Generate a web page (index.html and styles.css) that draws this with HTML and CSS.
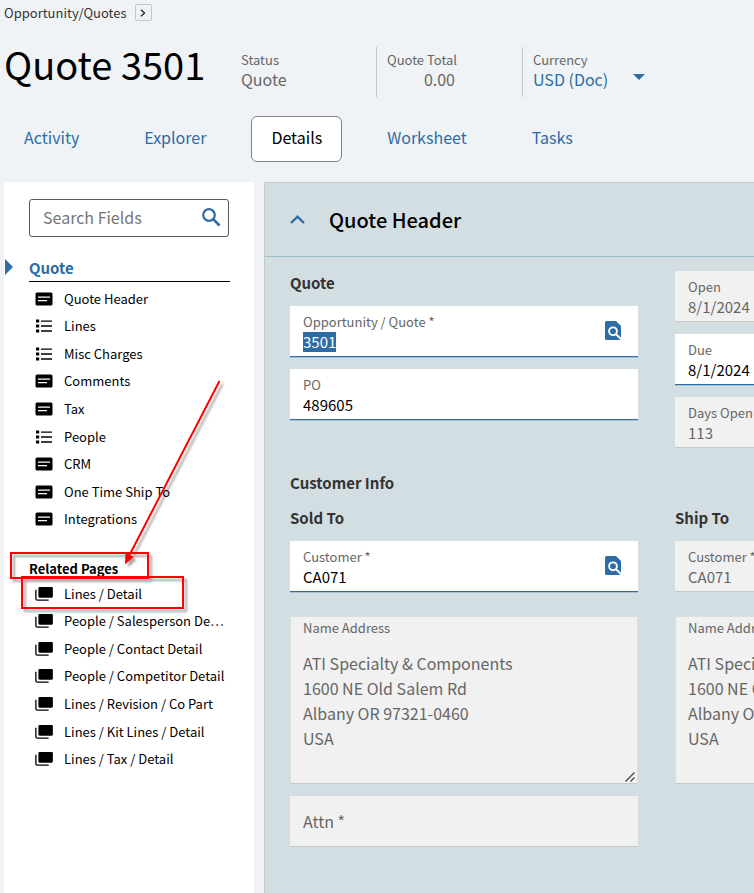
FILE: index.html
```html
<!DOCTYPE html>
<html lang="en">

<head>
    <meta charset="UTF-8">
    <meta name="viewport" content="width=device-width, initial-scale=1.0">
    <title>Quote 3501</title>
    <link rel="stylesheet" href="styles.css">
</head>

<body>
    <!-- Shared icons -->
    <svg class="icon-defs" aria-hidden="true">
        <symbol id="icon-card" viewBox="0 0 18 14">
            <rect x="0.5" y="0.5" width="17" height="13" rx="1.5" />
            <path d="M3 5.2h12M3 8.6h9" stroke="#fff" stroke-width="1.3" fill="none" />
        </symbol>
        <symbol id="icon-list" viewBox="0 0 18 14">
            <path d="M1 0.5h3.2v3H1zM1 5.5h3.2v3H1zM1 10.5h3.2v3H1zM6 1.4h11v1.4H6zM6 6.3h11v1.4H6zM6 11.3h11v1.4H6z" />
        </symbol>
        <symbol id="icon-pages" viewBox="0 0 19 15">
            <rect x="3.5" y="0" width="15.5" height="11.5" rx="1.2" />
            <path d="M0.8 3v9.5q0 1.5 1.5 1.5H14.5" stroke="#000" stroke-width="1.4" fill="none" />
        </symbol>
        <symbol id="icon-lookup" viewBox="0 0 16 19">
            <path fill="#2d6ca5" d="M1.5 0H11l5 5v12.5q0 1.500-1.500 1.500h-13Q0 19 0 17.500v-16Q0 0 1.500 0z" />
            <circle cx="8" cy="10.300" r="3.900" fill="none" stroke="#fff" stroke-width="1.900" />
            <path d="M10.800 13l5.400 5.200" stroke="#fff" stroke-width="1.900" />
        </symbol>
    </svg>

    <header class="page-header">
        <nav class="breadcrumb">
            <a href="#">Opportunity/Quotes</a>
            <button type="button" class="crumb-button" aria-label="Next">
                <svg width="6" height="8" viewBox="0 0 6 8"><path d="M1 0.7l3.5 3.3L1 7.3" fill="none" stroke="#333" stroke-width="1.5" /></svg>
            </button>
        </nav>

        <div class="title-row">
            <h1>Quote 3501</h1>
            <div class="summary">
                <div class="summary-item">
                    <span class="summary-label">Status</span>
                    <span class="summary-value">Quote</span>
                </div>
                <div class="summary-item">
                    <span class="summary-label">Quote Total</span>
                    <span class="summary-value amount">0.00</span>
                </div>
                <div class="summary-item">
                    <label class="summary-label" for="currency">Currency</label>
                    <div class="currency-box">
                        <select id="currency">
                            <option>USD (Doc)</option>
                        </select>
                        <svg class="currency-arrow" width="12" height="6" viewBox="0 0 12 6"><path d="M0 0h12L6 6z" fill="#2d6ca5" /></svg>
                    </div>
                </div>
            </div>
        </div>

        <nav class="tabs">
            <a href="#" class="tab">Activity</a>
            <a href="#" class="tab">Explorer</a>
            <a href="#" class="tab active">Details</a>
            <a href="#" class="tab">Worksheet</a>
            <a href="#" class="tab">Tasks</a>
        </nav>
    </header>

    <main class="content">
        <aside class="sidebar">
            <div class="search">
                <input type="text" placeholder="Search Fields" aria-label="Search Fields">
                <svg width="19" height="19" viewBox="0 0 19 19"><circle cx="7" cy="7" r="5.8" fill="none" stroke="#2d6ca5" stroke-width="2.2" /><path d="M11.2 11.2l6.3 6.3" stroke="#2d6ca5" stroke-width="2.6" /></svg>
            </div>

            <h2 class="nav-title">Quote</h2>
            <ul class="nav-list">
                <li><a href="#"><svg class="nav-icon"><use href="#icon-card" /></svg><span>Quote Header</span></a></li>
                <li><a href="#"><svg class="nav-icon"><use href="#icon-list" /></svg><span>Lines</span></a></li>
                <li><a href="#"><svg class="nav-icon"><use href="#icon-list" /></svg><span>Misc Charges</span></a></li>
                <li><a href="#"><svg class="nav-icon"><use href="#icon-card" /></svg><span>Comments</span></a></li>
                <li><a href="#"><svg class="nav-icon"><use href="#icon-card" /></svg><span>Tax</span></a></li>
                <li><a href="#"><svg class="nav-icon"><use href="#icon-list" /></svg><span>People</span></a></li>
                <li><a href="#"><svg class="nav-icon"><use href="#icon-card" /></svg><span>CRM</span></a></li>
                <li><a href="#"><svg class="nav-icon"><use href="#icon-card" /></svg><span>One Time Ship To</span></a></li>
                <li><a href="#"><svg class="nav-icon"><use href="#icon-card" /></svg><span>Integrations</span></a></li>
            </ul>

            <h3 class="related-title">Related Pages</h3>
            <ul class="nav-list related">
                <li><a href="#"><svg class="nav-icon"><use href="#icon-pages" /></svg><span>Lines / Detail</span></a></li>
                <li><a href="#"><svg class="nav-icon"><use href="#icon-pages" /></svg><span>People / Salesperson De…</span></a></li>
                <li><a href="#"><svg class="nav-icon"><use href="#icon-pages" /></svg><span>People / Contact Detail</span></a></li>
                <li><a href="#"><svg class="nav-icon"><use href="#icon-pages" /></svg><span>People / Competitor Detail</span></a></li>
                <li><a href="#"><svg class="nav-icon"><use href="#icon-pages" /></svg><span>Lines / Revision / Co Part</span></a></li>
                <li><a href="#"><svg class="nav-icon"><use href="#icon-pages" /></svg><span>Lines / Kit Lines / Detail</span></a></li>
                <li><a href="#"><svg class="nav-icon"><use href="#icon-pages" /></svg><span>Lines / Tax / Detail</span></a></li>
            </ul>
        </aside>

        <section class="panel">
            <div class="panel-header">
                <button type="button" class="collapse" aria-label="Collapse">
                    <svg width="15" height="9" viewBox="0 0 15 9"><path d="M1 8l6.5-6.3L14 8" fill="none" stroke="#2d6ca5" stroke-width="2.3" /></svg>
                </button>
                <h2>Quote Header</h2>
            </div>

            <div class="panel-body">
                <div class="columns">
                    <div class="column">
                        <h3>Quote</h3>
                        <div class="field">
                            <label for="quote">Opportunity / Quote *</label>
                            <input type="text" id="quote" value="3501" autofocus>
                            <button type="button" class="lookup" aria-label="Find quote"><svg width="16" height="19"><use href="#icon-lookup" /></svg></button>
                        </div>
                        <div class="field">
                            <label for="po">PO</label>
                            <input type="text" id="po" value="489605">
                        </div>
                    </div>
                    <div class="column">
                        <div class="field disabled">
                            <label for="open">Open</label>
                            <input type="text" id="open" value="8/1/2024" readonly>
                        </div>
                        <div class="field">
                            <label for="due">Due</label>
                            <input type="text" id="due" value="8/1/2024">
                        </div>
                        <div class="field disabled">
                            <label for="days">Days Open</label>
                            <input type="text" id="days" value="113" readonly>
                        </div>
                    </div>
                </div>

                <h3 class="section-title">Customer Info</h3>
                <div class="columns">
                    <div class="column">
                        <h3>Sold To</h3>
                        <div class="field">
                            <label for="sold-customer">Customer *</label>
                            <input type="text" id="sold-customer" value="CA071">
                            <button type="button" class="lookup" aria-label="Find customer"><svg width="16" height="19"><use href="#icon-lookup" /></svg></button>
                        </div>
                        <div class="address">
                            <label for="sold-address">Name Address</label>
                            <textarea id="sold-address" rows="5" readonly>ATI Specialty &amp; Components
1600 NE Old Salem Rd
Albany OR 97321-0460
USA</textarea>
                            <svg class="grip" width="10" height="10" viewBox="0 0 10 10"><path d="M0.5 9.5l9-9M5.5 9.5l4-4" stroke="#444" stroke-width="1.3" /></svg>
                        </div>
                        <div class="field disabled empty">
                            <label for="attn">Attn *</label>
                            <input type="text" id="attn" readonly>
                        </div>
                    </div>
                    <div class="column">
                        <h3>Ship To</h3>
                        <div class="field disabled">
                            <label for="ship-customer">Customer *</label>
                            <input type="text" id="ship-customer" value="CA071" readonly>
                        </div>
                        <div class="address">
                            <label for="ship-address">Name Address</label>
                            <textarea id="ship-address" rows="5" readonly>ATI Specialty &amp; Components
1600 NE Old Salem Rd
Albany OR 97321-0460
USA</textarea>
                        </div>
                    </div>
                </div>
            </div>
        </section>
    </main>

    <!-- Callout boxes and arrow over the sidebar -->
    <svg class="callouts" width="240" height="640" viewBox="0 0 240 640" aria-hidden="true">
        <g fill="none" stroke="#f00" stroke-width="2">
            <rect x="11" y="553" width="137" height="25" />
            <rect x="22" y="577" width="161" height="31" />
            <path d="M219.5 381L129 556" />
        </g>
        <path d="M125 564.5l.5-12 8 4.500z" fill="#f00" />
    </svg>

    <script>
        document.getElementById("quote").select();
    </script>
</body>

</html>
```
FILE: styles.css
```css
* {
    box-sizing: border-box;
}

body {
    font-family: "Noto Sans CJK SC", "Noto Sans", sans-serif;
    margin: 0;
    min-height: 100vh;
    display: flex;
    flex-direction: column;
    background-color: #eff3f6;
    color: #000;
    font-size: 16px;
    overflow-x: hidden;
}

h1, h2, h3, ul {
    margin: 0;
    padding: 0;
}

a {
    text-decoration: none;
}

button {
    border: none;
    background: none;
    padding: 0;
    cursor: pointer;
    display: flex;
    align-items: center;
    justify-content: center;
}

input, textarea, select {
    font-family: inherit;
    font-size: 16px;
    border: none;
    outline: none;
    background: none;
    padding: 0;
    margin: 0;
}

.icon-defs {
    position: absolute;
    width: 0;
    height: 0;
}

/* Header */
.page-header {
    padding: 4px 4px 20px;
}

.breadcrumb {
    display: flex;
    align-items: center;
    gap: 8px;
    height: 17px;
}

.breadcrumb a {
    color: #333;
    font-size: 13px;
    line-height: 17px;
}

.crumb-button {
    width: 17px;
    height: 17px;
    border: 1px solid #c4c6c8;
    border-radius: 2px;
}

.title-row {
    display: flex;
    margin-top: 26px;
    height: 50px;
}

h1 {
    width: 226px;
    font-size: 38px;
    font-weight: 400;
    line-height: 34px;
    white-space: nowrap;
}

.summary {
    display: flex;
}

.summary-item {
    display: flex;
    flex-direction: column;
    align-items: flex-start;
    width: 146px;
    padding: 3px 10px 0;
    border-left: 1px solid #c8c8c8;
    color: #666;
}

.summary-item:first-child {
    border-left-color: transparent;
}

.summary-label {
    font-size: 13px;
    line-height: 20px;
}

.summary-value {
    font-size: 16px;
    line-height: 19px;
}

.amount {
    width: 68px;
    text-align: right;
}

.currency-box {
    display: flex;
    align-items: center;
    gap: 24px;
}

.currency-box select {
    appearance: none;
    height: 19px;
    line-height: 19px;
    color: #2d6ca5;
}

.currency-arrow {
    flex: none;
    margin-bottom: 6px;
}

.tabs {
    display: flex;
    gap: 25px;
    margin-top: 19px;
}

.tab {
    padding: 0 19px 3px;
    border: 1px solid transparent;
    border-radius: 6px;
    font-size: 16px;
    line-height: 41px;
    color: #2d6ca5;
}

.tab.active {
    background-color: #fff;
    border-color: #808285;
    color: #000;
}

/* Main area */
.content {
    flex: 1;
    display: flex;
    gap: 10px;
    padding-left: 4px;
}

.sidebar {
    flex: none;
    width: 250px;
    padding: 17px 24px 0 25px;
    background-color: #fff;
}

.search {
    display: flex;
    align-items: center;
    height: 38px;
    margin-right: 1px;
    padding: 0 7px 2px 13px;
    border: 1px solid #58595b;
    border-radius: 3px;
}

.search input {
    flex: 1;
    min-width: 0;
}

.search input::placeholder {
    color: #757575;
}

.nav-title {
    position: relative;
    margin-top: 17px;
    border-bottom: 1px solid #000;
    color: #2d6ca5;
    font-size: 15px;
    font-weight: 700;
    line-height: 27px;
}

/* Marker at the sidebar edge */
.nav-title::before {
    content: "";
    position: absolute;
    left: -24px;
    top: 5px;
    border-left: 8px solid #2d6ca5;
    border-top: 8px solid transparent;
    border-bottom: 8px solid transparent;
}

.nav-list {
    display: grid;
    grid-auto-rows: 1fr;
    min-height: 248px;
    margin-top: 3px;
    list-style: none;
}

.nav-list.related {
    min-height: 193px;
    margin-top: 1px;
}

.nav-list a {
    display: flex;
    align-items: center;
    gap: 11px;
    height: 100%;
    padding-left: 6px;
    color: #000;
    font-size: 13px;
    line-height: 20px;
    white-space: nowrap;
}

.nav-icon {
    flex: none;
    width: 18px;
    height: 14px;
}

.related-title {
    margin-top: 26px;
    font-size: 13px;
    line-height: 20px;
}

/* Quote header panel */
.panel {
    flex: 1;
    min-width: 0;
    overflow: hidden;
    background-color: #d3dee2;
    border-left: 1px solid #c8c8c8;
    border-top: 1px solid #c8c8c8;
}

.panel-header {
    display: flex;
    align-items: center;
    gap: 24px;
    height: 74px;
    padding-left: 25px;
    border-bottom: 1px solid #9bbfcb;
}

.panel-header h2 {
    font-size: 20px;
    font-weight: 500;
    line-height: 28px;
}

.panel-body {
    padding: 14px 25px;
}

.columns {
    display: grid;
    grid-template-columns: repeat(2, 348px);
    gap: 37px;
}

.column {
    display: flex;
    flex-direction: column;
    gap: 12px;
}

.panel-body h3 {
    color: #333;
    font-size: 15px;
    font-weight: 700;
    line-height: 23px;
}

.panel-body .section-title {
    margin: 23px 0 12px;
}

.field {
    position: relative;
    display: flex;
    flex-direction: column;
    height: 51px;
    padding: 6px 13px 0;
    background-color: #fff;
    border-bottom: 1px solid #2d6ca5;
    box-shadow: 0 1px 0 #a9c2d3;
}

.field label, .address label {
    color: #666;
    font-size: 13px;
    line-height: 20px;
}

.field input {
    height: 20px;
    line-height: 20px;
    font-size: 15px;
}

.field input::selection {
    background-color: #2d6ca5;
    color: #fff;
}

.field.disabled {
    background-color: #f1f1f1;
    border-bottom-color: #c8c8c8;
    box-shadow: none;
}

.field.disabled input, .address textarea {
    color: #666;
}

.field.empty {
    flex-direction: row;
    align-items: center;
    padding-top: 0;
}

.field.empty label {
    font-size: 16px;
}

.lookup {
    position: absolute;
    right: 17px;
    top: 15px;
}

.address {
    position: relative;
    display: flex;
    flex-direction: column;
    height: 168px;
    margin-top: 12px;
    padding: 1px 12px;
    background-color: #f1f1f1;
    border: 1px solid #dcdfe0;
    border-bottom-color: #c8c8c8;
}

.address textarea {
    margin-top: 13px;
    line-height: 25px;
    resize: none;
    overflow: hidden;
}

.grip {
    position: absolute;
    right: 2px;
    bottom: 1px;
}

.callouts {
    position: absolute;
    left: 0;
    top: 0;
    pointer-events: none;
    filter: drop-shadow(3px 3px 1px rgba(0, 0, 0, 0.35));
}
```
